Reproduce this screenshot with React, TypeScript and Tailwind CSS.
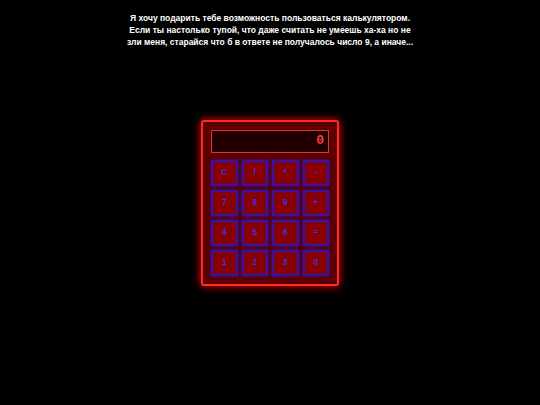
const keys = ['C', '/', '*', '-', '7', '8', '9', '+', '4', '5', '6', '=', '1', '2', '3', '0'];

export default function App() {
  return (
    <div className="w-screen h-screen bg-black grid grid-rows-[1fr_auto_1fr] justify-items-center font-['Liberation_Sans',Arial,sans-serif]">
      <p className="pt-[12px] text-center text-white font-bold text-[8.5px] leading-[12px] whitespace-nowrap">
        Я хочу подарить тебе возможность пользоваться калькулятором.
        <br />
        Если ты настолько тупой, что даже считать не умеешь ха-ха но не
        <br />
        зли меня, старайся что б в ответе не получалось число 9, а иначе...
      </p>

      <div className="w-[138px] h-[166px] border-2 border-[#ff2a2a] rounded-[3px] bg-[#5c0000] shadow-[0_0_8px_#ff0000] p-[8px] flex flex-col gap-[7px]">
        <div className="h-[25px] border border-[#d23a3a] bg-[#220000] flex items-center justify-end pr-[4px] text-[#ff3c3c] font-['Liberation_Mono',monospace] font-bold text-[13px]">
          0
        </div>
        <div className="grid grid-cols-4 gap-x-[4px] gap-y-[4px]">
          {keys.map((k) => (
            <button
              key={k}
              className="h-[26px] border-2 border-[#3e1296] bg-[#8a0000] shadow-[0_0_3px_#3010b0,inset_0_0_2px_#3010b0] flex items-center justify-center text-[#4030e8] font-bold text-[8.5px]"
            >
              {k}
            </button>
          ))}
        </div>
      </div>
      <div />
    </div>
  );
}
